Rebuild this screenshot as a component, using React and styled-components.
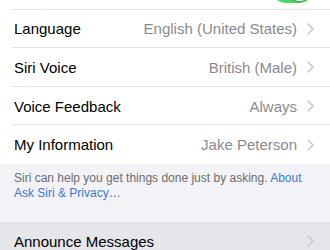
import React from "react";
import styled, { createGlobalStyle } from "styled-components";

const Global = createGlobalStyle`
  html, body { margin: 0; padding: 0; background: #ffffff; }
  body { font-family: "Liberation Sans", Arial, sans-serif; -webkit-font-smoothing: antialiased; }
  #root { width: 330px; height: 250px; overflow: hidden; }
`;

const Screen = styled.div`
  width: 330px;
  height: 250px;
  overflow: hidden;
  background: #ffffff;
`;

const Scroller = styled.div`
  margin-top: -29px;
  display: flex;
  flex-direction: column;
`;

const Group = styled.div`
  display: flex;
  flex-direction: column;
  background: ${(p) => p.$bg || "#ffffff"};
`;

const Row = styled.div`
  display: flex;
  align-items: center;
  height: 38.6px;
  padding-left: 14px;
  padding-right: 16px;
  position: relative;
  background: ${(p) => (p.$pressed ? "#e5e5ea" : "transparent")};
  &::after {
    content: "";
    display: ${(p) => (p.$last ? "none" : "block")};
    position: absolute;
    left: 12px;
    right: 0;
    bottom: 0;
    height: 1px;
    background: #e3e3e6;
  }
`;

const Label = styled.span`
  flex: 1;
  font-size: 15px;
  color: #000000;
  white-space: nowrap;
`;

const Value = styled.span`
  font-size: 15px;
  color: #8a8a8e;
  white-space: nowrap;
  margin-right: 10px;
`;

const Chevron = styled.svg`
  width: 7px;
  height: 12px;
  flex: none;
`;

const Switch = styled.div`
  width: 41px;
  height: 27px;
  border-radius: 14px;
  background: #4cd964;
  position: relative;
  margin-right: 1px;
  margin-top: -2px;
  &::after {
    content: "";
    position: absolute;
    right: 2px;
    top: 2px;
    width: 23px;
    height: 23px;
    border-radius: 50%;
    background: #ffffff;
    box-shadow: 0 1px 2px rgba(0, 0, 0, 0.25);
  }
`;

const Footer = styled.div`
  background: #f2f2f7;
  padding: 7px 20px 21px 14px;
  font-size: 12px;
  line-height: 15px;
  color: #6d6d72;
`;

const Link = styled.span`
  color: #3a7bd5;
`;

const ChevronIcon = () => (
  <Chevron viewBox="0 0 7 12">
    <path d="M1 1l5 5-5 5" fill="none" stroke="#c6c6ca" strokeWidth="1.5" strokeLinecap="round" strokeLinejoin="round" />
  </Chevron>
);

const rows = [
  ["Language", "English (United States)"],
  ["Siri Voice", "British (Male)"],
  ["Voice Feedback", "Always"],
  ["My Information", "Jake Peterson"],
];

export default function App() {
  return (
    <Screen>
      <Global />
      <Scroller>
        <Group>
          <Row>
            <Label />
            <Switch />
          </Row>
          {rows.map(([l, v], i) => (
            <Row key={l} $last={i === rows.length - 1}>
              <Label>{l}</Label>
              <Value>{v}</Value>
              <ChevronIcon />
            </Row>
          ))}
        </Group>
        <Footer>
          Siri can help you get things done just by asking. <Link>About Ask Siri &amp; Privacy…</Link>
        </Footer>
        <Group $bg="#e5e5ea">
          <Row $pressed $last>
            <Label>Announce Messages</Label>
            <ChevronIcon />
          </Row>
        </Group>
      </Scroller>
    </Screen>
  );
}
